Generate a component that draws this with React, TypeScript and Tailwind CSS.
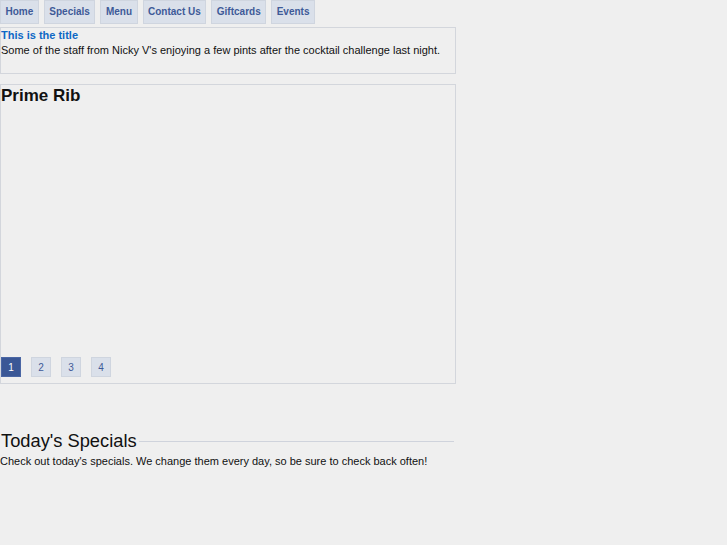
const NAV = ['Home', 'Specials', 'Menu', 'Contact Us', 'Giftcards', 'Events']

export default function App() {
  return (
    <div className="min-h-[545px] bg-[#efefef] text-[11px] text-[#111] font-['Liberation_Sans',Arial,sans-serif]">
      <div className="w-[456px]">
        {/* nav */}
        <ul className="flex gap-[5px]">
          {NAV.map((n) => (
            <li
              key={n}
              className="h-[24px] px-[4.5px] flex items-center bg-[#dae0ea] border border-[#cfd5df] text-[#3e5a98] font-bold text-[10px] leading-none pb-[1px]"
            >
              {n}
            </li>
          ))}
        </ul>

        {/* caption box */}
        <div className="mt-[3px] h-[47px] border border-[#d3d6dc]">
          <div className="text-[#0d68c5] font-bold leading-[14px]">This is the title</div>
          <p className="leading-[14px] mt-[1px]">
            Some of the staff from Nicky V's enjoying a few pints after the cocktail challenge last night.
          </p>
        </div>

        {/* slider */}
        <div className="mt-[10px] h-[300px] border border-[#d3d6dc] flex flex-col">
          <h2 className="text-[17px] font-bold leading-[20px] mt-[1px]">Prime Rib</h2>
          <div className="mt-auto mb-[6px] flex gap-[10px]">
            {[1, 2, 3, 4].map((i) => (
              <span
                key={i}
                className={
                  i === 1
                    ? 'w-[20px] h-[20px] flex items-center justify-center bg-[#3a5796] border border-[#4a66a4] text-white text-[10px]'
                    : 'w-[20px] h-[20px] flex items-center justify-center bg-[#dae0ea] border border-[#cfd5df] text-[#3e5a98] text-[10px]'
                }
              >
                {i}
              </span>
            ))}
          </div>
        </div>

        {/* specials */}
        <div className="mt-[46px] flex items-center">
          <h2 className="ml-px text-[18.3px] leading-[22px] text-[#111]">Today's Specials</h2>
          <div className="flex-1 h-px bg-[#cfd3dc] ml-[2px] mr-[2px]" />
        </div>
        <p className="leading-[14px] mt-[2px] w-[460px]">
          Check out today's specials. We change them every day, so be sure to check back often!
        </p>
      </div>
    </div>
  )
}
